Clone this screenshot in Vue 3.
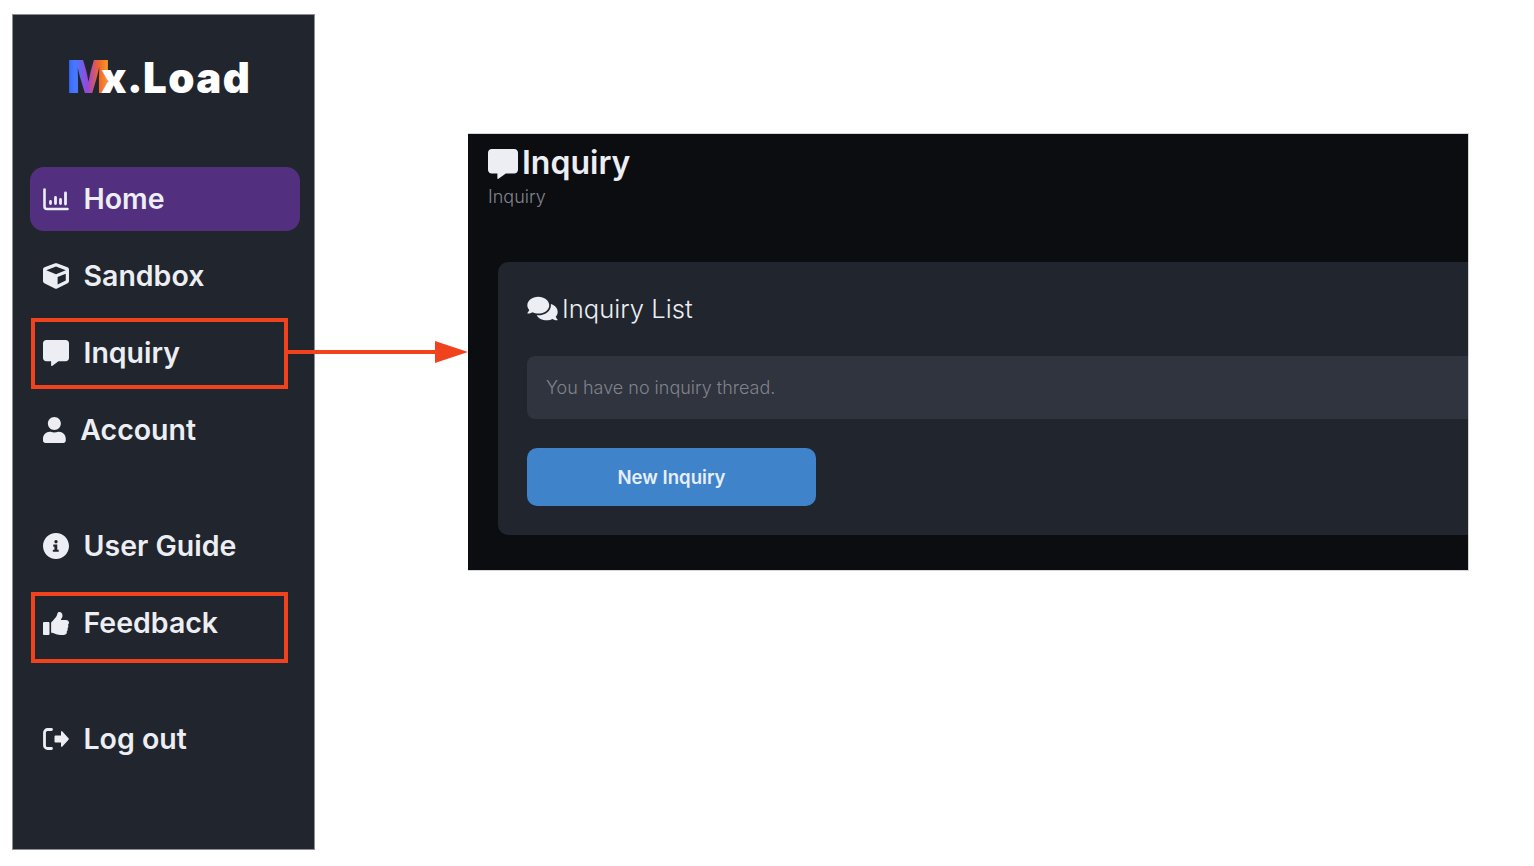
<script setup>
const icons = {
  cube: { box: '0 0 512 512', d: 'M239.1 6.3l-208 78c-18.7 7-31.1 25-31.1 45v225.1c0 18.2 10.3 34.8 26.5 42.9l208 104c13.5 6.8 29.4 6.8 42.9 0l208-104c16.3-8.1 26.5-24.8 26.5-42.9V129.3c0-20-12.4-37.9-31.1-44.9l-208-78C262 2.2 250 2.2 239.1 6.3zM256 68.4l192 72v1.1l-192 78-192-78v-1.1l192-72zm32 356V275.5l160-65v133.9l-160 80z' },
  comment: { box: '0 0 512 512', d: 'M448 0H64C28.7 0 0 28.7 0 64v288c0 35.3 28.7 64 64 64h96v84c0 9.8 11.2 15.5 19.1 9.7L304 416h144c35.3 0 64-28.7 64-64V64c0-35.3-28.7-64-64-64z' },
  user: { box: '0 0 448 512', d: 'M224 256c70.7 0 128-57.3 128-128S294.7 0 224 0 96 57.3 96 128s57.3 128 128 128zm89.6 32h-16.7c-22.2 10.2-46.9 16-72.9 16s-50.6-5.8-72.9-16h-16.7C60.2 288 0 348.2 0 422.4V464c0 26.5 21.5 48 48 48h352c26.5 0 48-21.5 48-48v-41.6c0-74.2-60.2-134.4-134.4-134.4z' },
  info: { box: '8 8 496 496', d: 'M256 8C119 8 8 119 8 256s111 248 248 248 248-111 248-248S393 8 256 8zM256 140a32 32 0 1 0 .01 0zM204 226h76v100h28v42H196v-42h30v-58h-22z' },
  thumb: { box: '0 0 512 512', height: 23, d: 'M104 224H24c-13.255 0-24 10.745-24 24v240c0 13.255 10.745 24 24 24h80c13.255 0 24-10.745 24-24V248c0-13.255-10.745-24-24-24zM384 81.452c0 42.416-25.97 66.208-33.277 94.548h101.723c33.397 0 59.397 27.746 59.553 58.098.084 17.938-7.546 37.249-19.439 49.197l-.11.11c9.836 23.337 8.237 56.037-9.308 79.469 8.681 25.895-.069 57.704-16.382 74.757 4.298 17.598 2.244 32.575-6.148 44.632C440.202 511.587 389.616 512 346.839 512l-2.845-.001c-48.287-.017-87.806-17.598-119.56-31.725-15.957-7.099-36.821-15.887-52.651-16.178-6.54-.12-11.783-5.457-11.783-11.998v-213.77c0-3.2 1.282-6.271 3.558-8.521 39.614-39.144 56.648-80.587 89.117-113.111 14.804-14.832 20.188-37.236 25.393-58.902C282.515 39.293 291.817 0 312 0c24 0 72 8 72 81.452z' }
}

const commentsPath = 'M416 192c0-88.4-93.1-160-208-160S0 103.6 0 192c0 34.3 14.1 65.9 38 92-13.4 30.2-35.5 54.2-35.8 54.5-2.2 2.3-2.8 5.7-1.5 8.7S4.8 352 8 352c36.6 0 66.9-12.3 88.7-25 32.2 15.7 70.3 25 111.3 25 114.9 0 208-71.6 208-160zm122 220c23.9-26 38-57.7 38-92 0-66.9-53.5-124.2-129.3-148.1.9 6.6 1.3 13.3 1.3 20.1 0 105.9-107.7 192-240 192-10.8 0-21.3-.8-31.7-1.9C207.8 439.6 281.8 480 368 480c41 0 79.1-9.2 111.3-25 21.8 12.7 52.1 25 88.7 25 3.2 0 6.1-1.9 7.3-4.8 1.3-2.9.7-6.3-1.5-8.7-.3-.3-22.4-24.2-35.8-54.5z'

// Menu groups, with the annotated entries flagged
const groups = [
  [
    { label: 'Home', icon: 'chart', active: true },
    { label: 'Sandbox', icon: 'cube' },
    { label: 'Inquiry', icon: 'comment', marked: 'mark-inquiry' },
    { label: 'Account', icon: 'user' }
  ],
  [
    { label: 'User Guide', icon: 'info' },
    { label: 'Feedback', icon: 'thumb', marked: 'mark-feedback' }
  ],
  [
    { label: 'Log out', icon: 'logout' }
  ]
]

const iconWidth = (name) => {
  const parts = icons[name].box.split(' ')
  return (parts[2] / parts[3]) * 26
}
</script>

<template>
  <div class="figure">
    <aside class="sidebar">
      <div class="logo"><span class="logo-m">M</span><span class="logo-x">x.</span><span class="logo-load">Load</span></div>
      <nav class="menu">
        <div v-for="(group, i) in groups" :key="i" class="menu-group">
          <a
            v-for="item in group"
            :key="item.label"
            class="menu-item"
            :class="[{ active: item.active }, item.marked]"
          >
            <svg v-if="item.icon === 'chart'" class="menu-icon" viewBox="0 0 26 26" width="26" height="26" fill="none" stroke="currentColor" stroke-linecap="round">
              <path d="M1.5 3.500V20.500a2.500 2.500 0 0 0 2.500 2.500h20.500" stroke-width="2.600" />
              <path d="M7.500 15.500v2M12.500 11.500v6M17.500 13.500v4M22.500 7v11" stroke-width="2.800" />
            </svg>
            <svg v-else-if="item.icon === 'logout'" class="menu-icon" viewBox="0 0 26 26" width="26" height="26">
              <path d="M8.500 3.500H4.500a3 3 0 0 0-3 3v13a3 3 0 0 0 3 3h4" fill="none" stroke="currentColor" stroke-width="2.800" stroke-linecap="round" />
              <path d="M12.500 9.500h5.500V6a.8.8 0 0 1 1.400-.6l6.100 6.900a1 1 0 0 1 0 1.400l-6.100 6.900a.8.8 0 0 1-1.400-.6v-3.500h-5.500a1 1 0 0 1-1-1v-5a1 1 0 0 1 1-1z" fill="currentColor" />
            </svg>
            <svg
              v-else
              class="menu-icon"
              :viewBox="icons[item.icon].box"
              :width="iconWidth(item.icon)"
              :height="icons[item.icon].height || 26"
              preserveAspectRatio="none"
              fill="currentColor"
              fill-rule="evenodd"
            >
              <path :d="icons[item.icon].d" />
            </svg>
            <span class="menu-label">{{ item.label }}</span>
          </a>
        </div>
      </nav>
    </aside>

    <svg class="arrow" viewBox="0 0 184 24" width="184" height="24">
      <path d="M0 12H152" stroke="#f0421c" stroke-width="4" />
      <path d="M151 1L184 12L151 23Z" fill="#f0421c" />
    </svg>

    <section class="panel">
      <h1 class="title">
        <svg class="title-icon" viewBox="0 0 512 512" width="30" height="30" fill="currentColor">
          <path :d="icons.comment.d" />
        </svg>
        Inquiry
      </h1>
      <p class="crumb">Inquiry</p>
      <div class="card">
        <h2 class="card-title">
          <svg viewBox="0 0 576 512" width="31" height="27" fill="currentColor">
            <path :d="commentsPath" />
          </svg>
          Inquiry List
        </h2>
        <div class="empty">You have no inquiry thread.</div>
        <button class="new-btn" type="button">New Inquiry</button>
      </div>
    </section>
  </div>
</template>

<style scoped>
.figure {
  position: relative;
  display: flex;
  align-items: flex-start;
  height: 866px;
  padding: 14px 0 0 12px;
  box-sizing: border-box;
  overflow: hidden;
  font-family: Inter, "Noto Sans", sans-serif;
  color: #eceef3;
}

.sidebar {
  flex: none;
  width: 302.500px;
  height: 836px;
  box-sizing: border-box;
  background: #21252d;
  border: 1px solid #8b8e94;
  padding: 0 13.500px 0 17px;
}

.logo {
  height: 152px;
  padding: 32px 0 0 37px;
  box-sizing: border-box;
  font-size: 42px;
  line-height: 60px;
  font-weight: 900;
  color: #fff;
  white-space: nowrap;
}

.logo-m {
  font-size: 45px;
  background: linear-gradient(90deg, #3e5cff 0%, #3f7dff 18%, #9a45d8 48%, #f0642c 74%, #f9a825 100%);
  -webkit-background-clip: text;
  background-clip: text;
  color: transparent;
}

.logo-x {
  margin-left: -9px;
  letter-spacing: 0.4px;
}

.logo-load {
  letter-spacing: 1.4px;
}

.menu-group {
  display: flex;
  flex-direction: column;
  gap: 13px;
  margin-bottom: 52px;
}

.menu-item {
  position: relative;
  display: flex;
  align-items: center;
  height: 64px;
  padding-left: 13px;
  border-radius: 14px;
  font-size: 28.5px;
  font-weight: 600;
  white-space: nowrap;
}

.menu-label {
  margin: 0 0 2px -0.5px;
}

.menu-item.active {
  background: #52307f;
}

.mark-inquiry::after,
.mark-feedback::after {
  content: '';
  position: absolute;
  left: 1px;
  right: 12px;
  border: 4px solid #f0421c;
}

.mark-inquiry::after {
  top: -3px;
  bottom: -4px;
}

.mark-feedback::after {
  top: 1px;
  bottom: -8px;
}

.menu-icon {
  flex: none;
  margin-right: 15px;
}

.arrow {
  position: absolute;
  left: 284px;
  top: 340px;
}

.panel {
  flex: none;
  width: 1001px;
  height: 438px;
  margin: 119px 0 0 153.500px;
  box-sizing: border-box;
  background: #0c0d11;
  border: 1px solid #d4d5d7;
  border-width: 1px 1px 1px 0;
  padding: 10px 0 0 20px;
  overflow: hidden;
}

.title {
  display: flex;
  align-items: center;
  gap: 4px;
  margin: 0;
  height: 36px;
  font-size: 32px;
  font-weight: 600;
}

.title-icon {
  margin-top: 3px;
}

.crumb {
  margin: 5px 0 0;
  font-size: 18px;
  line-height: 24px;
  font-weight: 300;
  color: #83868d;
}

.card {
  width: 1100px;
  height: 273px;
  margin: 53px 0 0 10px;
  box-sizing: border-box;
  padding: 29px 29px;
  background: #21252d;
  border-radius: 10px;
}

.card-title {
  display: flex;
  align-items: center;
  gap: 4px;
  margin: 0;
  height: 34px;
  font-size: 25.6px;
  font-weight: 300;
}

.empty {
  height: 63px;
  margin-top: 31px;
  padding-left: 19px;
  background: #30343f;
  border-radius: 8px;
  font-size: 18px;
  font-weight: 300;
  line-height: 63px;
  color: #80838b;
}

.new-btn {
  display: block;
  width: 289px;
  height: 58px;
  margin-top: 29px;
  border: none;
  border-radius: 10px;
  background: #3f83cb;
  color: #e6effa;
  font-family: inherit;
  font-size: 18.6px;
  font-weight: 600;
}
</style>
